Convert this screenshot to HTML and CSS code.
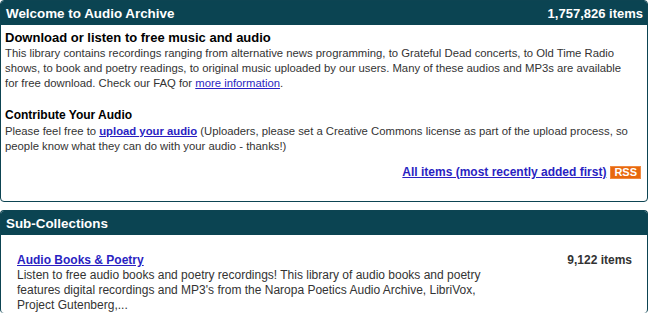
FILE: index.html
```html
<!DOCTYPE html>
<html>
<head>
<meta charset="utf-8">
<link rel="stylesheet" href="styles.css">
</head>
<body>
<div class="box">
  <div class="box-head">
    <span class="head-title">Welcome to Audio Archive</span>
    <span class="head-count">1,757,826 items</span>
  </div>
  <div class="box-body">
    <h1 class="main-title">Download or listen to free music and audio</h1>
    <p class="text">This library contains recordings ranging from alternative news programming, to Grateful Dead concerts, to Old Time Radio shows, to book and poetry readings, to original music uploaded by our users. Many of these audios and MP3s are available for free download. Check our FAQ for <a href="#" class="link">more information</a>.</p>
    <h2 class="sub-title">Contribute Your Audio</h2>
    <p class="text last">Please feel free to <a href="#" class="link bold">upload your audio</a> (Uploaders, please set a Creative Commons license as part of the upload process, so people know what they can do with your audio - thanks!)</p>
    <div class="all-row">
      <a href="#" class="link bold">All items (most recently added first)</a>
      <span class="rss">RSS</span>
    </div>
  </div>
</div>
<div class="box second">
  <div class="box-head">
    <span class="head-title">Sub-Collections</span>
  </div>
  <div class="coll-body">
    <div class="coll">
      <div class="coll-main">
        <a href="#" class="link bold">Audio Books &amp; Poetry</a>
        <div class="desc">Listen to free audio books and poetry recordings! This library of audio books and poetry features digital recordings and MP3's from the Naropa Poetics Audio Archive, LibriVox, Project Gutenberg,...</div>
      </div>
      <div class="coll-count">9,122 items</div>
    </div>
  </div>
</div>
</body>
</html>
```
FILE: styles.css
```css
html, body {
  margin: 0;
  padding: 0;
  background: #ffffff;
}
body {
  font-family: "Liberation Sans", Arial, sans-serif;
  color: #333333;
  width: 650px;
  overflow: hidden;
}
.box {
  border: 1px solid #0d4452;
  border-radius: 4px;
  width: 648px;
  box-sizing: border-box;
}
.box.second {
  margin-top: 8px;
  border-bottom: none;
}
.box-head {
  background: #0b4452;
  color: #ffffff;
  height: 24px;
  display: flex;
  justify-content: space-between;
  align-items: center;
  padding: 0 4px 0 5px;
  font-weight: bold;
  font-size: 13.4px;
  border-radius: 3px 3px 0 0;
}
.head-count {
  font-size: 13px;
}
.box-body {
  padding: 4px 4px 22px 4px;
}
.main-title {
  font-size: 13px;
  font-weight: bold;
  color: #000000;
  margin: 0;
  line-height: 17px;
}
.sub-title {
  font-size: 12px;
  font-weight: bold;
  color: #000000;
  margin: 0;
  line-height: 18px;
}
.text {
  font-size: 11.3px;
  line-height: 15px;
  margin: 0 0 15px 0;
  max-width: 632px;
}
.text.last {
  margin-bottom: 11px;
}
.link {
  color: #2a1fc2;
  text-decoration: underline;
}
.bold {
  font-weight: bold;
}
.all-row {
  display: flex;
  justify-content: flex-end;
  align-items: center;
  gap: 4px;
  font-size: 12px;
  padding-right: 2px;
}
.rss {
  background: #e8680d;
  color: #ffffff;
  font-weight: bold;
  font-size: 11px;
  padding: 0 3px;
  line-height: 11px;
  border: 1px solid #f08a40;
}
.coll-body {
  padding: 18px 15px 0 16px;
}
.coll {
  display: flex;
  justify-content: space-between;
  align-items: flex-start;
}
.coll-main {
  width: 472px;
  font-size: 12px;
  line-height: 15px;
}
.desc {
  font-size: 12px;
  line-height: 15px;
}
.coll-count {
  font-size: 12px;
  line-height: 15px;
  font-weight: bold;
  color: #333333;
}
```
